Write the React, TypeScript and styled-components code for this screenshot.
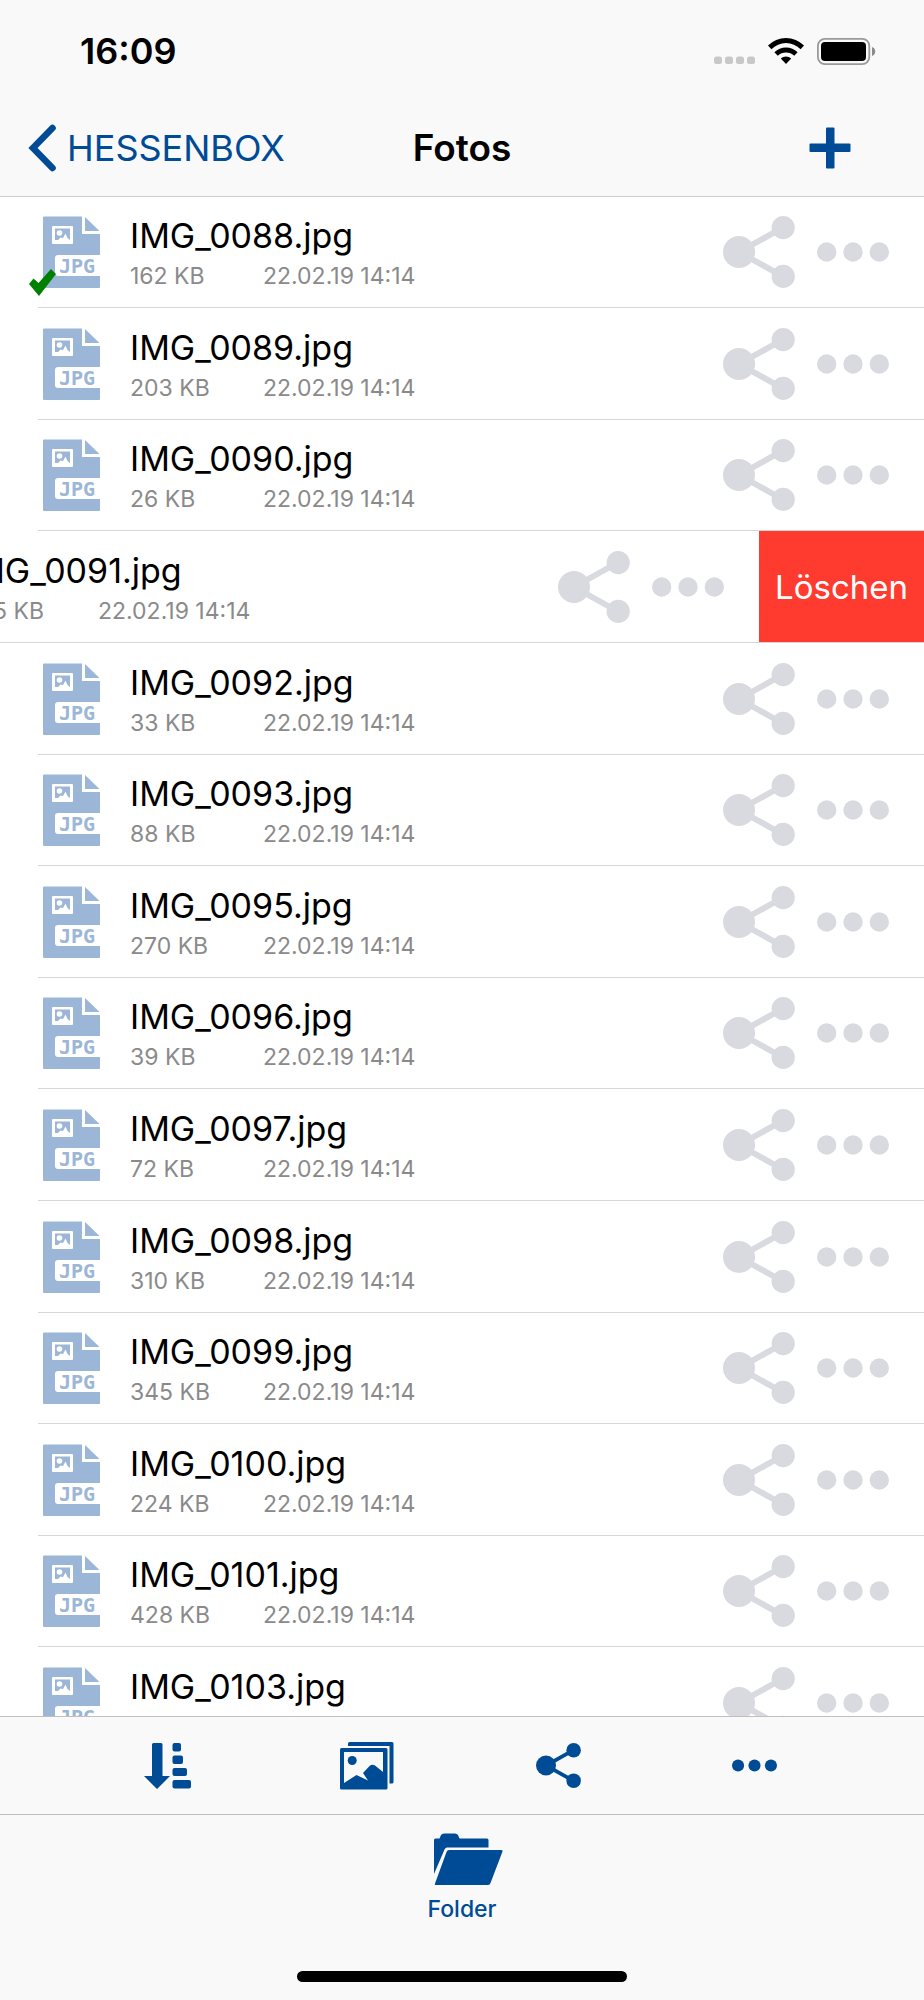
import React from "react";
import styled, { createGlobalStyle, css } from "styled-components";

const blue = "#004b96";
const barGray = "#f9f9f9";
const line = "#d6d6d8";

const GlobalStyle = createGlobalStyle`
  * { box-sizing: border-box; }
  body { margin: 0; background: #fff; color: #000; font-family: Inter, "Liberation Sans", sans-serif; }
  svg { display: block; flex: none; }
`;

const Screen = styled.div`
  display: flex;
  flex-direction: column;
  height: 100vh;
`;

const Header = styled.header`
  flex: none;
  background: ${barGray};
  border-bottom: 1px solid #cfcfcf;
`;

const StatusBar = styled.div`
  display: flex;
  align-items: center;
  justify-content: space-between;
  height: 98px;
  padding: 4px 48px 0 80px;
`;

const Clock = styled.time`
  font-size: 36px;
  font-weight: 600;
  line-height: 44px;
`;

const StatusIcons = styled.div`
  display: flex;
  align-items: center;
  gap: 13px;
`;

const NavBar = styled.nav`
  display: grid;
  grid-template-columns: 1fr auto 1fr;
  align-items: center;
  height: 98px;
  padding: 2px 73px 0 28px;
`;

const plainButton = css`
  appearance: none;
  border: 0;
  margin: 0;
  padding: 0;
  background: none;
  font-family: inherit;
  cursor: pointer;
`;

const BackLink = styled.a`
  display: flex;
  align-items: center;
  gap: 10px;
  color: ${blue};
  font-size: 36px;
  line-height: 48px;
  text-decoration: none;
`;

const Title = styled.h1`
  margin: 0;
  font-size: 37px;
  font-weight: 600;
  line-height: 48px;
`;

const IconButton = styled.button`
  ${plainButton}
  color: ${blue};
`;

const AddButton = styled(IconButton)`
  justify-self: end;
`;

const NavTitleSlot = styled.div`
  margin-left: 45px;
`;

const FileList = styled.ul`
  flex: 1 1 0;
  min-height: 0;
  margin: 0;
  padding: 0;
  overflow-x: hidden;
  overflow-y: auto;
  scrollbar-width: none;
  list-style: none;
`;

const FileRow = styled.li`
  display: flex;
  justify-content: flex-end;
  height: 112px;
  overflow: hidden;
  &:nth-child(5n + 1),
  &:nth-child(5n + 3) {
    height: 111px;
  }
`;

const Slide = styled.div`
  flex: 0 0 100%;
  padding-left: 38px;
`;

const Cell = styled.div`
  display: flex;
  align-items: center;
  height: 100%;
  padding: 0 35px 0 5px;
  border-bottom: 1px solid ${line};
`;

const Thumb = styled.div`
  position: relative;
  flex: none;
`;

const CheckBadge = styled.svg`
  position: absolute;
  left: -14px;
  bottom: -8px;
`;

const FileText = styled.div`
  flex: 1;
  min-width: 0;
  margin-left: 30px;
`;

const FileName = styled.div`
  font-size: 34px;
  line-height: 44px;
  white-space: nowrap;
`;

const Meta = styled.div`
  display: flex;
  color: #8a8a8a;
  font-size: 23px;
  line-height: 28px;
  margin-top: 4px;
`;

const Size = styled.span`
  width: 133px;
`;

const RowButtons = styled.div`
  display: flex;
  gap: 22px;
`;

const RowButton = styled.button`
  ${plainButton}
  color: #d9dae0;
`;

const DeleteButton = styled.button`
  ${plainButton}
  flex: 0 0 165px;
  border-bottom: 1px solid ${line};
  background: #ff3b30;
  color: #fff;
  font-size: 33px;
`;

const Toolbar = styled.div`
  display: flex;
  flex: none;
  align-items: center;
  justify-content: space-between;
  height: 98px;
  padding: 0 147px 0 144px;
  border-top: 1px solid #bfbfc0;
  background: ${barGray};
`;

const TabBar = styled.footer`
  display: flex;
  flex: none;
  flex-direction: column;
  align-items: center;
  justify-content: space-between;
  height: 186px;
  padding: 18px 0;
  border-top: 1px solid #bfbfc0;
  background: ${barGray};
`;

const Tab = styled.a`
  display: flex;
  flex-direction: column;
  align-items: center;
  gap: 10px;
  color: ${blue};
  font-size: 23px;
  font-weight: 500;
  line-height: 28px;
  text-decoration: none;
`;

const HomeIndicator = styled.div`
  width: 330px;
  height: 11px;
  border-radius: 6px;
  background: #000;
`;

const SignalDots = () => (
  <svg width="41" height="26" viewBox="0 0 41 26" fill="#c8c8c8" aria-hidden="true">
    {[0, 11, 22, 33].map((x) => (
      <rect key={x} x={x} y="18.500" width="8" height="7.500" rx="2.500" />
    ))}
  </svg>
);

const Wifi = () => (
  <svg width="36" height="26" viewBox="0 0 36 26" aria-hidden="true">
    <path d="M0 7.6A25.4 25.4 0 0 1 36 7.6L32.6 11.2A20.5 20.5 0 0 0 3.4 11.2Z" />
    <path d="M6.4 14.2A16.6 16.6 0 0 1 29.6 14.2L26.2 17.8A11.8 11.8 0 0 0 9.8 17.8Z" />
    <path d="M12.8 20.6A7.8 7.8 0 0 1 23.2 20.6L18 26Z" />
  </svg>
);

const Battery = () => (
  <svg width="59" height="27" viewBox="0 0 59 27" aria-hidden="true">
    <rect x="0.9" y="0.9" width="51.4" height="25.2" rx="7" fill="none" stroke="#9a9a9a" strokeWidth="1.8" />
    <rect x="4" y="4" width="45" height="19" rx="4" />
    <path d="M55 9C59.3 10.500 59.3 16.500 55 18Z" fill="#8a8a8a" />
  </svg>
);

const ChevronLeft = () => (
  <svg width="29" height="48" viewBox="0 0 29 48" fill="none" stroke="currentColor" strokeWidth="6.6" strokeLinecap="round" strokeLinejoin="miter" aria-hidden="true">
    <path d="M24.500 4L5 24L24.500 44" />
  </svg>
);

const Plus = () => (
  <svg width="42" height="42" viewBox="0 0 42 42" fill="currentColor" aria-hidden="true">
    <rect x="17" y="0.500" width="8.500" height="41" rx="1" />
    <rect x="0.500" y="16.500" width="41" height="8.500" rx="1" />
  </svg>
);

const Share = ({ size, box = size }: { size: number; box?: number }) => (
  <svg width={box} height={size} viewBox={`0 0 ${(72 * box) / size} 72`} fill="currentColor" aria-hidden="true">
    <path d="M60 11.500L16 36L60 60.500" fill="none" stroke="currentColor" strokeWidth="6" />
    <circle cx="16" cy="36" r="16" />
    <circle cx="60.200" cy="11.600" r="11.600" />
    <circle cx="60.200" cy="60.400" r="11.600" />
  </svg>
);

const Dots = ({ size }: { size: number }) => (
  <svg width={size} height={size} viewBox="0 0 72 72" fill="currentColor" aria-hidden="true">
    <circle cx="9.700" cy="36" r="9.700" />
    <circle cx="36" cy="36" r="9.700" />
    <circle cx="62.300" cy="36" r="9.700" />
  </svg>
);

const JpgFile = () => (
  <svg width="57" height="72" viewBox="0 0 57 72" aria-hidden="true">
    <path d="M1 0.500H39V18H57V39H15Q12 39 12 42V57Q12 60 15 60H57V71Q57 72 56 72H1Q0 72 0 71V1.500Q0 0.500 1 0.500Z" fill="#9bb6d6" />
    <path d="M42 1L56.500 15H42Z" fill="#9bb6d6" />
    <rect x="9" y="10" width="21" height="18" rx="1" fill="#fff" />
    <path d="M12 12.500H27V24L24.500 22L22.500 17.500L20 22L17.500 21.500L15 24H12Z" fill="#9bb6d6" />
    <circle cx="16.500" cy="17" r="2.800" fill="#fff" />
    <text x="34" y="57" textAnchor="middle" fill="#9bb6d6" fontFamily="DejaVu Sans Mono, monospace" fontWeight="700" fontSize="20">JPG</text>
  </svg>
);

const Sort = () => (
  <svg width="48" height="46" viewBox="0 0 48 46" fill="currentColor" aria-hidden="true">
    <path d="M9.500 0H17Q18.500 0 18.500 1.500V33H26L13 46L0 33H8V1.500Q8 0 9.500 0Z" />
    <rect x="28.500" y="0" width="8.500" height="8.500" rx="2" />
    <rect x="28.500" y="12.500" width="10.500" height="8.500" rx="2" />
    <rect x="28.500" y="25" width="14.500" height="8" rx="2" />
    <rect x="28.500" y="37" width="18.500" height="8.500" rx="2" />
  </svg>
);

const Photos = () => (
  <svg width="60" height="48" viewBox="-2 0 60 48" fill="currentColor" aria-hidden="true">
    <path d="M13.500 0H56Q57.500 0 57.500 1.500V40Q57.500 41.500 56 41.500H53.500V4H12V1.500Q12 0 13.500 0Z" />
    <path fillRule="evenodd" d="M5.500 6H50Q51.500 6 51.500 7.500V46Q51.500 47.500 50 47.500H5.500Q4 47.500 4 46V7.500Q4 6 5.500 6ZM8 10V41L20.500 33L32 38.500L27 31L34 23.500Q36.500 22 39 23.500L47 30V10Z" />
    <circle cx="16.200" cy="18.500" r="4.500" />
  </svg>
);

const Folder = () => (
  <svg width="82" height="52" viewBox="0 0 82 52" fill="currentColor" aria-hidden="true">
    <path d="M13 41V7Q13 5.500 14.500 5.500H18.500L20 2Q21 0.500 23 0.500H34Q36 0.500 37 2L38.500 5.500H66Q67.500 5.500 67.500 7V14.500H26Q24.500 14.500 23.500 16.500Z" />
    <path d="M28 17H80.500Q82 17 81.500 18.500L69.500 50Q69 52 67 52H14.500Q13.500 52 14 50.500L25.500 19Q26.200 17 28 17Z" />
  </svg>
);

interface FileItem {
  name: string;
  size: string;
  checked?: boolean;
  swiped?: boolean;
}

const files: FileItem[] = [
  { name: "IMG_0088.jpg", size: "162 KB", checked: true },
  { name: "IMG_0089.jpg", size: "203 KB" },
  { name: "IMG_0090.jpg", size: "26 KB" },
  { name: "IMG_0091.jpg", size: "225 KB", swiped: true },
  { name: "IMG_0092.jpg", size: "33 KB" },
  { name: "IMG_0093.jpg", size: "88 KB" },
  { name: "IMG_0095.jpg", size: "270 KB" },
  { name: "IMG_0096.jpg", size: "39 KB" },
  { name: "IMG_0097.jpg", size: "72 KB" },
  { name: "IMG_0098.jpg", size: "310 KB" },
  { name: "IMG_0099.jpg", size: "345 KB" },
  { name: "IMG_0100.jpg", size: "224 KB" },
  { name: "IMG_0101.jpg", size: "428 KB" },
  { name: "IMG_0103.jpg", size: "" },
];

const FileEntry = ({ file }: { file: FileItem }) => (
  <FileRow>
    <Slide>
      <Cell>
        <Thumb>
          <JpgFile />
          {file.checked && (
            <CheckBadge width="27" height="27" viewBox="0 0 27 27" fill="#008000" aria-hidden="true">
              <path d="M0 15L4.500 9.500L9.500 14L22 0L27 5L10 27Z" />
            </CheckBadge>
          )}
        </Thumb>
        <FileText>
          <FileName>{file.name}</FileName>
          <Meta>
            <Size>{file.size}</Size>
            {file.size ? <span>22.02.19 14:14</span> : <span>&nbsp;</span>}
          </Meta>
        </FileText>
        <RowButtons>
          <RowButton aria-label={`${file.name} teilen`}>
            <Share size={72} />
          </RowButton>
          <RowButton aria-label={`${file.name} Optionen`}>
            <Dots size={72} />
          </RowButton>
        </RowButtons>
      </Cell>
    </Slide>
    {file.swiped && <DeleteButton>Löschen</DeleteButton>}
  </FileRow>
);

export default function App() {
  return (
    <Screen>
      <GlobalStyle />
      <Header>
        <StatusBar>
          <Clock>16:09</Clock>
          <StatusIcons>
            <SignalDots />
            <Wifi />
            <Battery />
          </StatusIcons>
        </StatusBar>
        <NavBar>
          <BackLink href="#">
            <ChevronLeft />
            HESSENBOX
          </BackLink>
          <NavTitleSlot>
            <Title>Fotos</Title>
          </NavTitleSlot>
          <AddButton aria-label="Hinzufügen">
            <Plus />
          </AddButton>
        </NavBar>
      </Header>
      <FileList>
        {files.map((file) => (
          <FileEntry key={file.name} file={file} />
        ))}
      </FileList>
      <Toolbar>
        <IconButton aria-label="Sortieren">
          <Sort />
        </IconButton>
        <IconButton aria-label="Bilder">
          <Photos />
        </IconButton>
        <IconButton aria-label="Teilen">
          <Share size={45} box={54} />
        </IconButton>
        <IconButton aria-label="Mehr">
          <Dots size={45} />
        </IconButton>
      </Toolbar>
      <TabBar>
        <Tab href="#">
          <Folder />
          Folder
        </Tab>
        <HomeIndicator />
      </TabBar>
    </Screen>
  );
}
